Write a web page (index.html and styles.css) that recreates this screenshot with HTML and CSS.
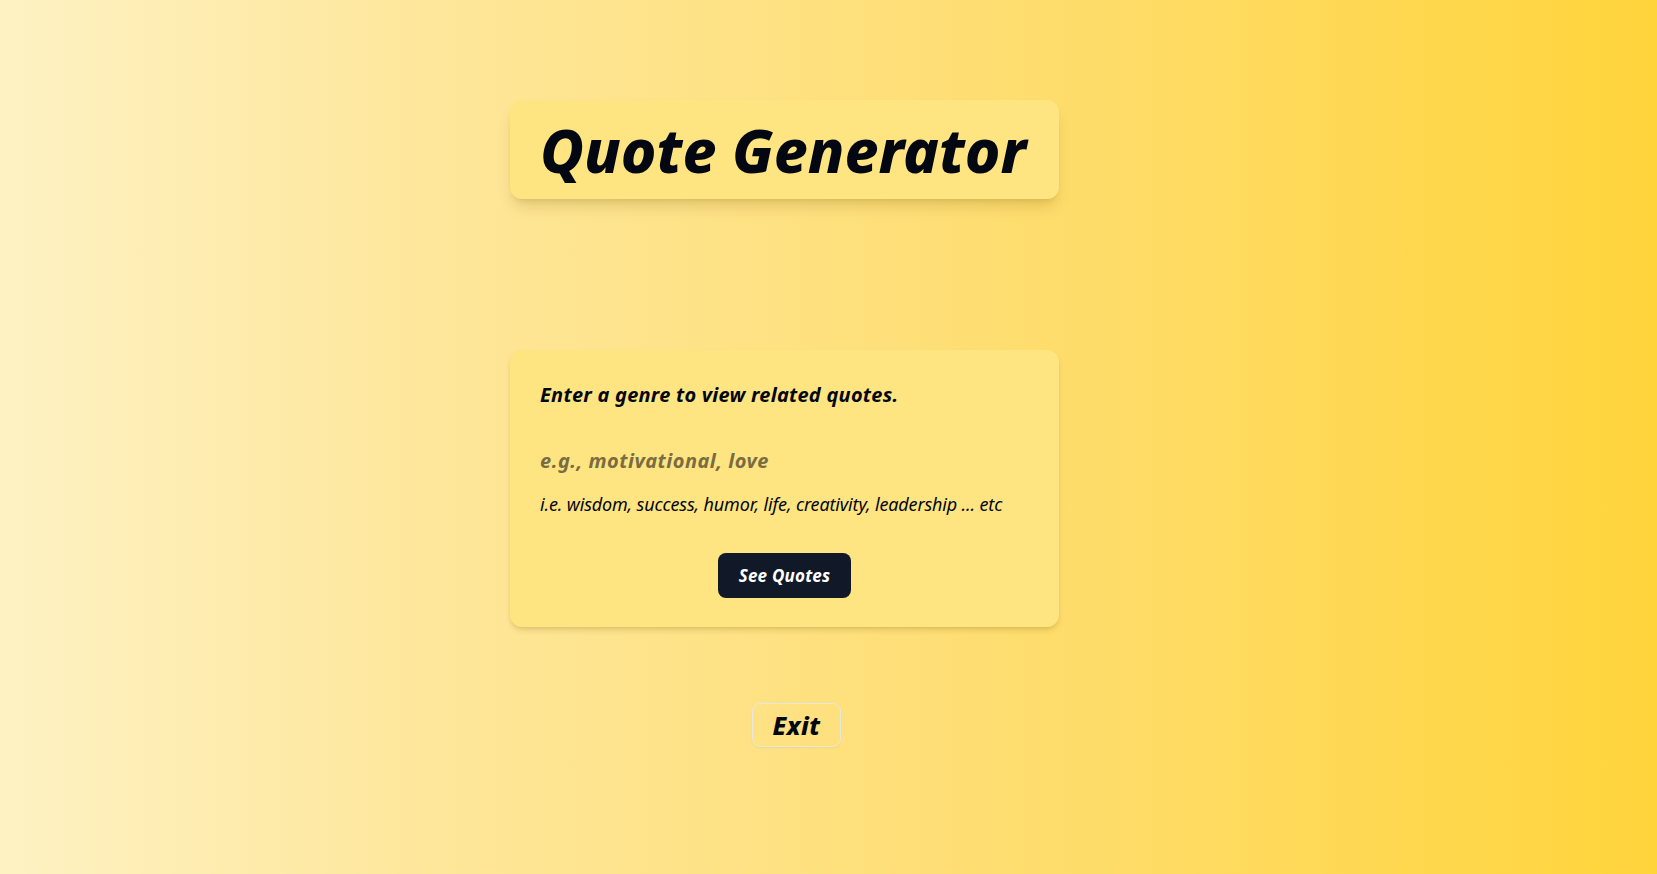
FILE: index.html
```html
<!DOCTYPE html>
<html lang="en">
<head>
<meta charset="utf-8">
<title>Quote Generator</title>
<link rel="stylesheet" href="styles.css">
</head>
<body>
<main class="page">
  <div class="column">
    <header class="title-box">
      <h1 class="title">Quote Generator</h1>
    </header>
    <section class="card">
      <h2 class="card-heading">Enter a genre to view related quotes.</h2>
      <input class="genre-input" type="text" placeholder="e.g., motivational, love">
      <p class="hint">i.e. wisdom, success, humor, life, creativity, leadership ... etc</p>
      <div class="actions">
        <button class="see-btn" type="button">See Quotes</button>
      </div>
    </section>
    <div class="exit-row">
      <button class="exit-btn" type="button">Exit</button>
    </div>
  </div>
</main>
</body>
</html>
```

FILE: styles.css
```css
* { box-sizing: border-box; }
html, body { margin: 0; padding: 0; height: 100%; }
body {
  font-family: "Noto Sans", "Open Sans", sans-serif;
  background: linear-gradient(to right, #fef2c4 0%, #fee79c 25%, #fedf78 55%, #ffd43b 100%);
  color: #030712;
}
.page {
  min-height: 874px;
  padding-top: 100px;
}
.column {
  width: 549px;
  margin-left: 510px;
  display: flex;
  flex-direction: column;
}
.title-box {
  background: #fee581;
  border-radius: 12px;
  height: 99px;
  display: flex;
  align-items: center;
  padding: 0 24px 0 30px;
  box-shadow: 0 10px 15px -3px rgba(120, 90, 0, 0.2), 0 4px 6px -4px rgba(120, 90, 0, 0.2);
}
.title {
  margin: 0;
  font-size: 60px;
  font-weight: 800;
  font-style: italic;
  line-height: 1;
  letter-spacing: 0;
  white-space: nowrap;
  color: #030712;
}
.card {
  margin-top: 151px;
  background: #fee581;
  border-radius: 12px;
  padding: 31px 30px 29px;
  box-shadow: 0 4px 6px -1px rgba(120, 90, 0, 0.18), 0 2px 4px -2px rgba(120, 90, 0, 0.18);
  display: flex;
  flex-direction: column;
}
.card-heading {
  margin: 0;
  font-size: 20px;
  font-weight: 700;
  font-style: italic;
  line-height: 28px;
  color: #030712;
  letter-spacing: 0.25px;
}
.genre-input {
  margin-top: 35px;
  border: none;
  background: transparent;
  outline: none;
  padding: 0;
  height: 32px;
  font-family: inherit;
  font-size: 20px;
  font-weight: 700;
  font-style: italic;
  letter-spacing: 0.5px;
  color: #030712;
}
.genre-input::placeholder {
  color: #7a6c42;
  opacity: 1;
}
.hint {
  margin: 14px 0 0;
  font-size: 18px;
  font-style: italic;
  line-height: 28px;
  color: #030712;
  letter-spacing: -0.15px;
}
.actions {
  margin-top: 35px;
  display: flex;
  justify-content: center;
}
.see-btn {
  width: 133px;
  height: 45px;
  border: none;
  border-radius: 8px;
  background: #111827;
  color: #ffffff;
  font-family: inherit;
  font-size: 17px;
  font-weight: 700;
  font-style: italic;
  letter-spacing: 0.2px;
}
.exit-row {
  margin-top: 76px;
  display: flex;
}
.exit-btn {
  margin-left: 242px;
  width: 89px;
  height: 44px;
  border: 1px solid rgba(229, 231, 235, 0.9);
  border-radius: 8px;
  background: transparent;
  color: #030712;
  font-family: inherit;
  font-size: 25px;
  font-weight: 800;
  font-style: italic;
  letter-spacing: 0.5px;
  box-shadow: 0 1px 2px rgba(0, 0, 0, 0.05);
}
```
